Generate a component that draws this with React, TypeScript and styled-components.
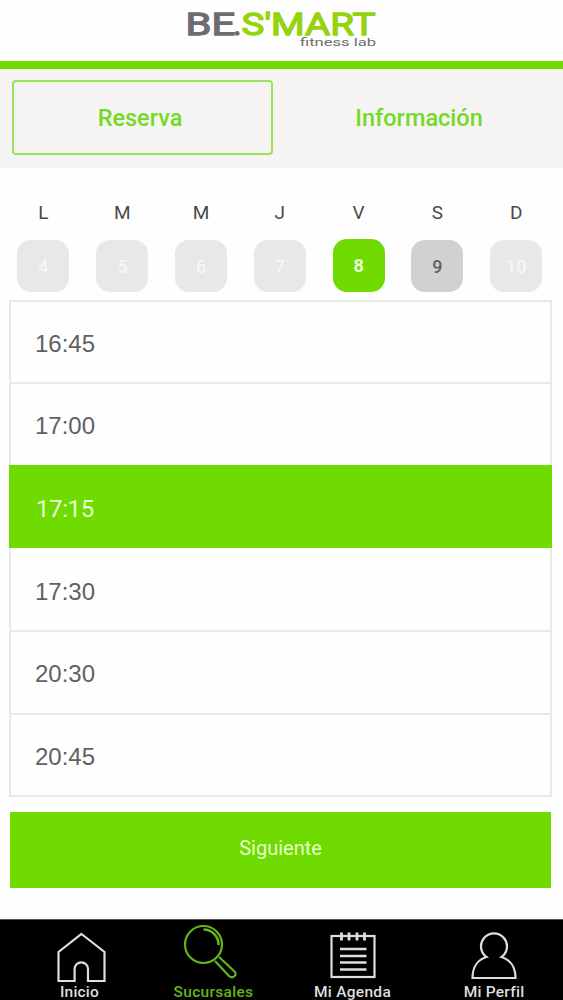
import React from 'react';
import styled, { createGlobalStyle, css } from 'styled-components';

const GREEN = '#6fdb00';

const GlobalStyle = createGlobalStyle`
  * { box-sizing: border-box; }
  body { margin: 0; background: #fefefe; font-family: Roboto, "Liberation Sans", sans-serif; }
  button { font: inherit; margin: 0; padding: 0; border: 0; background: none; }
`;

const Screen = styled.div`
  width: 563px;
  height: 1000px;
  display: flex;
  flex-direction: column;
  overflow: hidden;
`;

const Header = styled.header`
  height: 69px;
  flex: none;
  border-bottom: 8px solid ${GREEN};
  display: flex;
  justify-content: center;
`;

const Logo = styled.svg`
  display: block;
  width: 563px;
  height: 61px;
`;

const Tabs = styled.nav`
  flex: none;
  height: 99px;
  padding: 11px 11px 13px 12px;
  background: #f5f4f2;
  display: flex;
  gap: 17px;
`;

const Tab = styled.button<{ $active?: boolean }>`
  width: 261px;
  border: 2px solid ${(p) => (p.$active ? '#9be25c' : 'transparent')};
  border-radius: 4px;
  color: #74d929;
  font-size: 23.5px;
  font-weight: 500;
  line-height: 70px;
  padding-right: ${(p) => (p.$active ? 5 : 3)}px;
`;

const Week = styled.div`
  flex: none;
  height: 132px;
  padding: 34px 7px 8px 4px;
  display: grid;
  grid-template-columns: repeat(7, 78.8px);
`;

const Day = styled.div`
  display: flex;
  flex-direction: column;
  align-items: center;
  justify-content: space-between;
`;

const DayName = styled.span`
  color: #4a4a4a;
  font-size: 19px;
  line-height: 22px;
`;

type DayState = 'off' | 'selected' | 'open';

const dayLook = {
  off: css`height: 52px; background: #e8e7e9; color: #f8f8f9;`,
  selected: css`height: 53px; background: ${GREEN}; color: #eaffd8; font-weight: 700;`,
  open: css`height: 52px; background: #d2d0d3; color: #626063; font-weight: 500;`,
};

const DayNumber = styled.button<{ $state: DayState }>`
  width: 52px;
  border-radius: 14px;
  font-size: 18px;
  ${(p) => dayLook[p.$state]}
`;

const Slots = styled.div`
  flex: none;
  width: 543px;
  height: 497px;
  margin-left: 9px;
  border: 2px solid #e9e9ea;
  display: grid;
  grid-template-rows: 80px 83px 83px 82px 83px 82px;
`;

const Slot = styled.button<{ $selected?: boolean }>`
  display: flex;
  align-items: center;
  padding: 3px 0 0 24px;
  color: #626063;
  font-family: "Liberation Sans", sans-serif;
  font-size: 24px;
  & + & { border-top: 2px solid #e9e9ea; }
  ${(p) =>
    p.$selected &&
    css`
      && {
        margin: 0 -2px;
        padding-left: 27px;
        border-color: ${GREEN};
        background: ${GREEN};
        color: #e6ffd0;
        font-family: Roboto, sans-serif;
        letter-spacing: -0.4px;
      }
      && + button { border-color: transparent; }
    `}
`;

const Next = styled.button`
  flex: none;
  width: 541px;
  height: 76px;
  margin: 15px 0 0 10px;
  padding-bottom: 4px;
  background: ${GREEN};
  color: #e3ffcc;
  font-size: 20px;
`;

const BottomNav = styled.nav`
  flex: none;
  height: 81px;
  margin-top: auto;
  padding: 0 2px 0 10px;
  border-top: 1px solid #555;
  background: #000;
  display: grid;
  grid-template-columns: 139px 129px 149px 134px;
`;

const NavItem = styled.a<{ $active?: boolean }>`
  display: flex;
  flex-direction: column;
  align-items: center;
  color: ${(p) => (p.$active ? '#62b51b' : '#dedede')};
`;

const NavIcon = styled.svg`
  display: block;
  flex: none;
  width: 70px;
  height: 62px;
  fill: none;
  stroke: currentColor;
  stroke-width: 2.2;
`;

const NavLabel = styled.span<{ $spacing: number }>`
  font-size: 15.5px;
  line-height: 20px;
  font-weight: 500;
  white-space: nowrap;
  letter-spacing: ${(p) => p.$spacing}px;
`;

const days: { name: string; number: number; state: DayState }[] = [
  { name: 'L', number: 4, state: 'off' },
  { name: 'M', number: 5, state: 'off' },
  { name: 'M', number: 6, state: 'off' },
  { name: 'J', number: 7, state: 'off' },
  { name: 'V', number: 8, state: 'selected' },
  { name: 'S', number: 9, state: 'open' },
  { name: 'D', number: 10, state: 'off' },
];

const slots = ['16:45', '17:00', '17:15', '17:30', '20:30', '20:45'];

// Icons share a 70x62 box, centred on the label below.
const navItems = [
  {
    label: 'Inicio',
    spacing: 0.2,
    icon: <path d="M36.5 14 L59.5 32 V61 H43 V49 a6.7 6.7 0 0 0 -13.4 0 V61 H13.5 V32 Z" />,
  },
  {
    label: 'Sucursales',
    spacing: 0.3,
    active: true,
    icon: (
      <>
        <circle cx="24.5" cy="24.5" r="18.5" />
        <path d="M24.5 9.5 A15 15 0 0 1 39.5 25" strokeWidth="2.6" />
        <path d="M36 41 L50 56 Q53 58.5 55.5 56 Q58 53.5 55 51 L40 37" />
      </>
    ),
  },
  {
    label: 'Mi Agenda',
    spacing: 0.3,
    icon: (
      <>
        <rect x="13.5" y="16" width="43" height="41" />
        <path d="M23.5 12.5 v8 M31 12.5 v8 M39 12.5 v8 M46.5 12.5 v8" strokeWidth="2.8" />
        <path d="M22 29 H48.5 M22 36 H48.5 M22 42.5 H48.5 M22 49.5 H48.5" strokeWidth="2.6" />
      </>
    ),
  },
  {
    label: 'Mi Perfil',
    spacing: 0.25,
    icon: <path d="M27.5 37 A13 13 0 1 1 42.5 37 C51 39.5 56.5 47 56.5 58 H13.5 C13.5 47 19 39.5 27.5 37 Z" />,
  },
];

export default function App() {
  return (
    <Screen>
      <GlobalStyle />
      <Header>
        <Logo viewBox="0 0 563 61" fontFamily="Roboto, sans-serif">
          <g fontSize="32" strokeWidth="1.3">
            <text x="185.5" y="34.5" fill="#6e6b70" stroke="#6e6b70" textLength="49.5" lengthAdjust="spacingAndGlyphs">BE</text>
            <text x="233" y="34.5" fill="#6e6b70" stroke="#6e6b70">.</text>
            <text x="241.5" y="34.5" fill="#94d30d" stroke="#94d30d" textLength="134" lengthAdjust="spacingAndGlyphs">S'MART</text>
          </g>
          <text x="300" y="46" fontSize="11.5" fill="#6e6b70" textLength="76" lengthAdjust="spacingAndGlyphs">fitness lab</text>
        </Logo>
      </Header>
      <Tabs>
        <Tab $active>Reserva</Tab>
        <Tab>Información</Tab>
      </Tabs>
      <Week>
        {days.map((d) => (
          <Day key={d.number}>
            <DayName>{d.name}</DayName>
            <DayNumber $state={d.state}>{d.number}</DayNumber>
          </Day>
        ))}
      </Week>
      <Slots>
        {slots.map((time) => (
          <Slot key={time} $selected={time === '17:15'}>{time}</Slot>
        ))}
      </Slots>
      <Next>Siguiente</Next>
      <BottomNav>
        {navItems.map((item) => (
          <NavItem key={item.label} $active={item.active}>
            <NavIcon viewBox="0 0 70 62">{item.icon}</NavIcon>
            <NavLabel $spacing={item.spacing}>{item.label}</NavLabel>
          </NavItem>
        ))}
      </BottomNav>
    </Screen>
  );
}
